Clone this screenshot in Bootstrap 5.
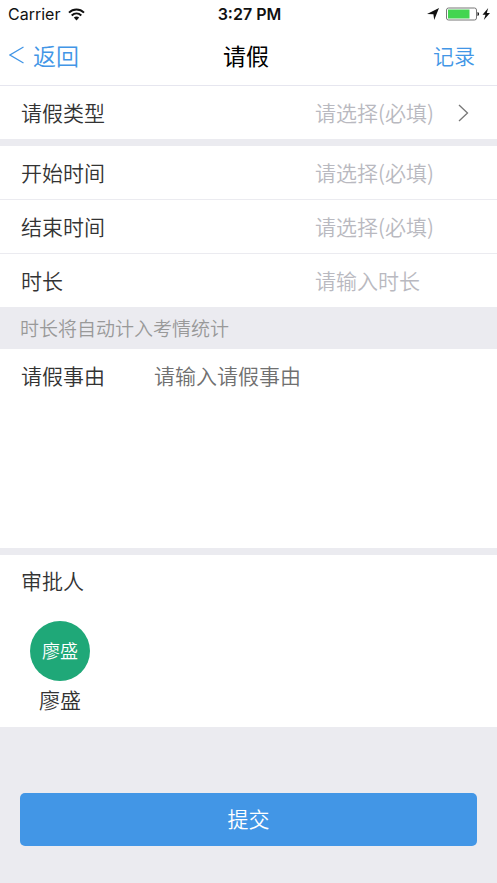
<!DOCTYPE html>
<html lang="zh-CN">
<head>
<meta charset="utf-8">
<meta name="viewport" content="width=device-width, initial-scale=1">
<title>请假</title>
<link href="https://cdn.jsdelivr.net/npm/bootstrap@5.3.0/dist/css/bootstrap.min.css" rel="stylesheet">
<style>
  :root { --line: #ebebf0; --blue: #4296e6; --hint: #b9b9c0; }
  body { background: var(--line); color: #333; font-family: "Noto Sans CJK SC", sans-serif; font-size: 21px; font-weight: 350; line-height: 32px; }
  .status-bar { height: 28px; padding: 0 6px 0 8px; color: #111; font-family: Inter, sans-serif; font-size: 16px; font-weight: 400; line-height: 28px; }
  .clock { font-weight: 600; }
  .title-bar { height: 58px; padding: 0 22px 4px 9px; border-bottom: 1px solid #e6e6ef; }
  .title-bar a { color: var(--blue); text-decoration: none; }
  .title-bar h1, .back-link { font-size: 23px; line-height: 32px; }
  .title-bar h1 { color: #000; font-weight: 400; }
  .back-link { gap: 9px; }
  .form-row { height: 54px; padding: 0 0 2px 21px; border-bottom: 1px solid var(--line); }
  .row-field { width: 182px; }
  .field { appearance: none; border: 0; outline: 0; padding: 0; background: transparent; color: var(--hint); font-weight: 350; line-height: 32px; }
  .field::placeholder { color: var(--hint); opacity: 1; }
  .section-gap { margin-bottom: 6px; }
  .note { padding: 4px 20px 5px; font-size: 19px; color: #999; }
  .reason { padding: 10px 20px 0 21px; margin-bottom: 7px; }
  .reason label { width: 133px; }
  .reason textarea { height: 189px; resize: none; color: #333; }
  .reason textarea::placeholder { color: #707070; }
  .approver { padding: 9px 20px 12px 21px; }
  .approver h2 { font-size: 21px; line-height: 32px; font-weight: 350; margin-bottom: 25px; }
  .person { width: 78px; }
  .avatar { width: 60px; height: 60px; padding-bottom: 2px; background: #1fa878; color: #fff; font-size: 18px; margin-bottom: 2px; }
  .submit-area { padding: 66px 20px 37px; }
  .submit-btn { --bs-btn-bg: #4296e6; --bs-btn-color: #fff; --bs-btn-hover-bg: #3587d6; --bs-btn-hover-color: #fff; --bs-btn-font-size: 21px; --bs-btn-font-weight: 350; height: 53px; padding-bottom: 8px; border: 0; border-radius: 5px; }
</style>
</head>
<body>
<div class="status-bar row-cols-3 d-flex align-items-center bg-white">
  <div class="d-flex align-items-center gap-2"><span>Carrier</span>
    <svg width="17" height="13" viewBox="0 0 17 13" fill="none" stroke="#111" stroke-width="2" aria-hidden="true"><path d="M1 4.600C5.200.5 11.800.5 16 4.600M3.700 7.400c2.800-2.600 6.800-2.600 9.600 0"/><path d="M5.800 9.500c1.600-1.400 3.800-1.400 5.400 0L8.500 12.400z" fill="#111" stroke="none"/></svg>
  </div>
  <div class="clock text-center">3:27 PM</div>
  <div class="d-flex align-items-center justify-content-end">
    <svg width="64" height="14" viewBox="0 0 64 14" aria-hidden="true">
      <path d="M12 1 7.200 13 6.400 7.300 0 7z" fill="#111"/>
      <rect x="19.5" y="1" width="30" height="12" rx="2" fill="#fff" stroke="#777"/>
      <path d="M21 2.500h21.500v9H21z" fill="#43d551"/>
      <path d="M50.500 5c2 .4 2 3.600 0 4z" fill="#111"/>
      <path d="m61.200 1-5.700 6.800h3L56.800 13l6.200-7h-3.200z" fill="#111"/>
    </svg>
  </div>
</div>
<header class="title-bar row-cols-3 d-flex align-items-center bg-white">
  <div><a href="#" class="back-link d-inline-flex align-items-center">
    <svg width="15" height="18" viewBox="0 0 15 18" fill="none" stroke="currentColor" stroke-width="1.3" aria-hidden="true"><path d="M14.500 1 1 9l13.500 8"/></svg>返回</a></div>
  <h1 class="text-center mb-0 ps-2">请假</h1>
  <div class="text-end"><a href="#">记录</a></div>
</header>
<form>
  <div class="form-row section-gap d-flex align-items-center bg-white">
    <label for="kind" class="flex-grow-1">请假类型</label>
    <div class="row-field d-flex align-items-center">
      <select id="kind" class="field flex-grow-1"><option>请选择(必填)</option></select>
      <svg class="me-4 flex-shrink-0" width="16" height="20" viewBox="0 0 16 20" fill="none" stroke="#777" stroke-width="1.3" aria-hidden="true"><path d="m2 3 8.500 8L2 19"/></svg>
    </div>
  </div>
  <div class="form-row d-flex align-items-center bg-white">
    <label for="start" class="flex-grow-1">开始时间</label>
    <input id="start" class="field row-field" type="text" placeholder="请选择(必填)">
  </div>
  <div class="form-row d-flex align-items-center bg-white">
    <label for="end" class="flex-grow-1">结束时间</label>
    <input id="end" class="field row-field" type="text" placeholder="请选择(必填)">
  </div>
  <div class="form-row d-flex align-items-center bg-white">
    <label for="duration" class="flex-grow-1">时长</label>
    <input id="duration" class="field row-field" type="text" placeholder="请输入时长">
  </div>
  <div class="note">时长将自动计入考情统计</div>
  <div class="reason d-flex align-items-start bg-white">
    <label for="reason" class="flex-shrink-0">请假事由</label>
    <textarea id="reason" class="field flex-grow-1" placeholder="请输入请假事由"></textarea>
  </div>
  <section class="approver bg-white">
    <h2>审批人</h2>
    <div class="person d-flex flex-column align-items-center">
      <div class="avatar rounded-circle d-flex align-items-center justify-content-center">廖盛</div>
      <div>廖盛</div>
    </div>
  </section>
  <div class="submit-area">
    <button type="submit" class="submit-btn btn w-100">提交</button>
  </div>
</form>
<script src="https://cdn.jsdelivr.net/npm/bootstrap@5.3.0/dist/js/bootstrap.bundle.min.js"></script>
</body>
</html>
